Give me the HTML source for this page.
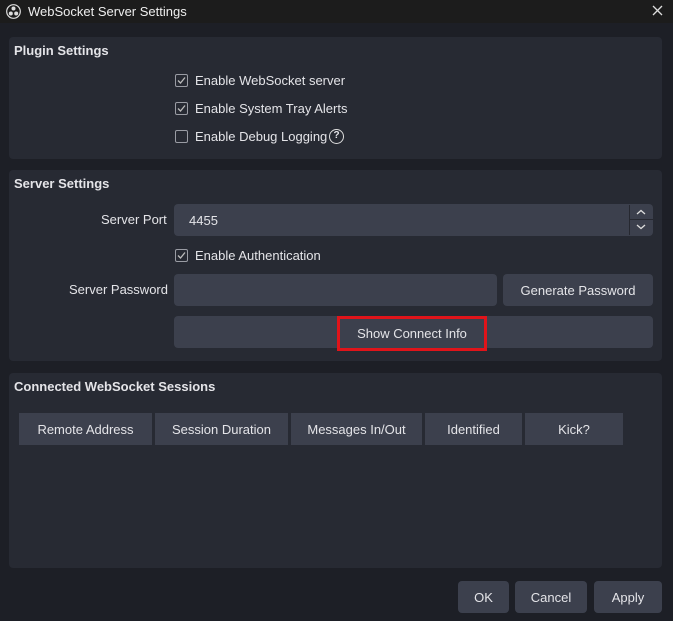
<!DOCTYPE html>
<html><head><style>
*{box-sizing:border-box;margin:0;padding:0}
body{width:673px;height:621px;background:#1d1f26;font-family:"Liberation Sans",sans-serif;font-size:13px;color:#e4e4e8;position:relative;overflow:hidden}
.a{position:absolute}
.title{left:0;top:0;width:673px;height:23px;background:#1c1c1c;}
.panel{background:#272a33;border-radius:4px;left:9px;width:653px}
.h{font-weight:bold;font-size:13px;left:14px}
.cb{width:13px;height:13px;border:1px solid #9a9ca4;border-radius:2px}
.inp{background:#3c404d;border-radius:4px}
.btn{background:#3c404d;border-radius:4px;display:flex;align-items:center;justify-content:center}
.th{background:#3c404d;top:413px;height:32px;display:flex;align-items:center;justify-content:center}
</style></head><body>
<div class="a title"></div>
<svg class="a" style="left:6px;top:4px" width="15" height="15" viewBox="0 0 15 15"><circle cx="7.5" cy="7.5" r="6.8" fill="none" stroke="#ddd" stroke-width="1.2"/><circle cx="7.5" cy="4.5" r="2" fill="#ddd"/><circle cx="4.8" cy="9.5" r="2" fill="#ddd"/><circle cx="10.2" cy="9.5" r="2" fill="#ddd"/></svg>
<div class="a" style="left:28px;top:4px;font-size:13px;color:#eee">WebSocket Server Settings</div>
<svg class="a" style="left:652px;top:5px" width="11" height="11" viewBox="0 0 11 11"><path d="M1 1L10 10M10 1L1 10" stroke="#ddd" stroke-width="1.3"/></svg>

<div class="a panel" style="top:37px;height:122px"></div>
<div class="a h" style="top:43px">Plugin Settings</div>
<div class="a cb" style="left:175px;top:74px"></div><svg class="a" style="left:175px;top:74px" width="13" height="13"><path d="M3 6.5L5.5 9L10 3.5" fill="none" stroke="#bbb" stroke-width="1.3"/></svg>
<div class="a" style="left:195px;top:73px">Enable WebSocket server</div>
<div class="a cb" style="left:175px;top:102px"></div><svg class="a" style="left:175px;top:102px" width="13" height="13"><path d="M3 6.5L5.5 9L10 3.5" fill="none" stroke="#bbb" stroke-width="1.3"/></svg>
<div class="a" style="left:195px;top:101px">Enable System Tray Alerts</div>
<div class="a cb" style="left:175px;top:130px"></div>
<div class="a" style="left:195px;top:129px">Enable Debug Logging</div>
<div class="a" style="left:329px;top:129px;width:15px;height:15px;border:1.5px solid #ddd;border-radius:50%;font-size:10px;font-weight:bold;text-align:center;line-height:12px">?</div>

<div class="a panel" style="top:170px;height:191px"></div>
<div class="a h" style="top:176px">Server Settings</div>
<div class="a" style="left:101px;top:212px">Server Port</div>
<div class="a inp" style="left:174px;top:204px;width:479px;height:32px"></div>
<div class="a" style="left:189px;top:213px">4455</div>
<div class="a" style="left:629px;top:205px;width:1px;height:30px;background:#262830"></div>
<div class="a" style="left:630px;top:219px;width:23px;height:1px;background:#262830"></div>
<svg class="a" style="left:635px;top:208px" width="12" height="24"><path d="M2 6L6 2.5L10 6M2 17L6 20.5L10 17" fill="none" stroke="#ddd" stroke-width="1.3"/></svg>
<div class="a cb" style="left:175px;top:249px"></div><svg class="a" style="left:175px;top:249px" width="13" height="13"><path d="M3 6.5L5.5 9L10 3.5" fill="none" stroke="#bbb" stroke-width="1.3"/></svg>
<div class="a" style="left:195px;top:248px">Enable Authentication</div>
<div class="a" style="left:69px;top:282px">Server Password</div>
<div class="a inp" style="left:174px;top:274px;width:323px;height:32px"></div>
<div class="a btn" style="left:503px;top:274px;width:150px;height:32px">Generate Password</div>
<div class="a inp" style="left:174px;top:316px;width:479px;height:32px"></div>
<div class="a btn" style="left:337px;top:316px;width:150px;height:35px;border:3px solid #e0141a;border-radius:0;background:transparent">Show Connect Info</div>

<div class="a panel" style="top:373px;height:195px"></div>
<div class="a h" style="top:379px">Connected WebSocket Sessions</div>
<div class="a th" style="left:19px;width:133px">Remote Address</div>
<div class="a th" style="left:155px;width:133px">Session Duration</div>
<div class="a th" style="left:291px;width:131px">Messages In/Out</div>
<div class="a th" style="left:425px;width:97px">Identified</div>
<div class="a th" style="left:525px;width:98px">Kick?</div>

<div class="a btn" style="left:458px;top:581px;width:51px;height:32px">OK</div>
<div class="a btn" style="left:515px;top:581px;width:72px;height:32px">Cancel</div>
<div class="a btn" style="left:594px;top:581px;width:68px;height:32px">Apply</div>
</body></html>
